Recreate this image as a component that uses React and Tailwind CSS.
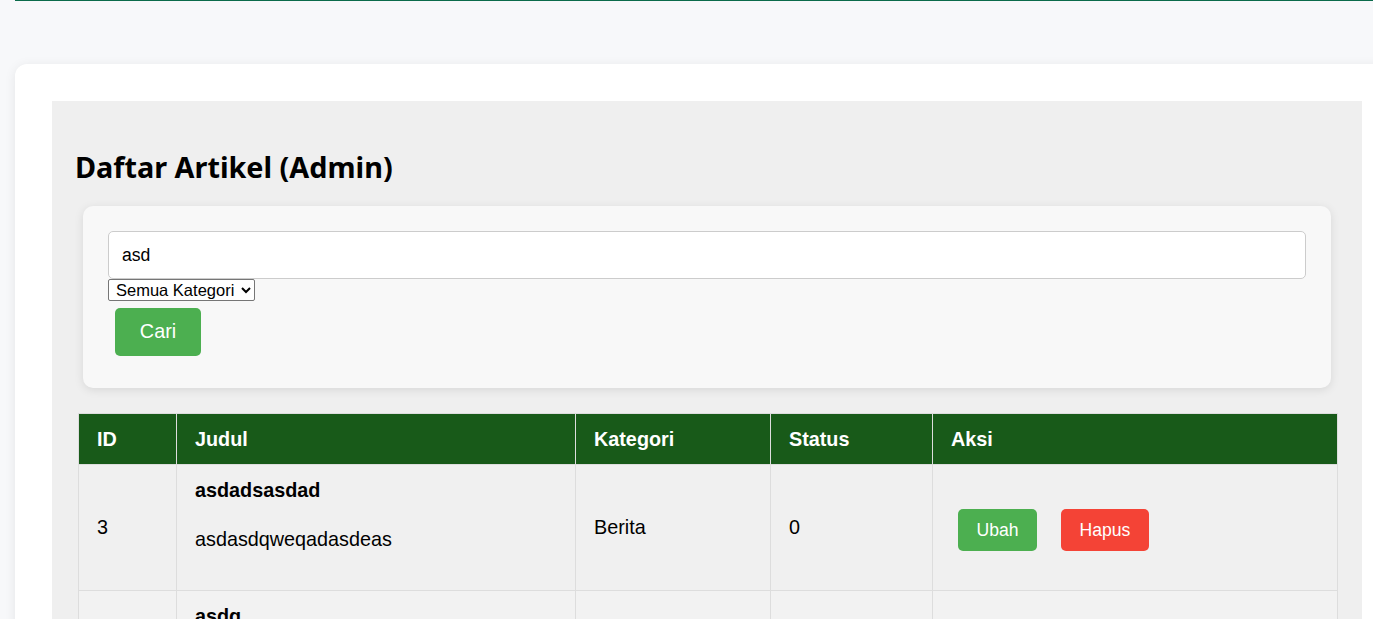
import { useState } from "react";

const rows = [
  { id: 3, title: "asdadsasdad", body: "asdasdqweqadasdeas", category: "Berita", status: 0 },
  { id: 4, title: "asdg", body: "asdgasdgasdg", category: "Berita", status: 0 },
];

function ArticleRow({ row, striped }) {
  return (
    <tr className={striped ? "bg-[#f2f2f2]" : "bg-[#f0f0f0]"}>
      <td className="border border-[#dddddd] px-[18px] align-middle">{row.id}</td>
      <td className="border border-[#dddddd] px-[18px] pt-[14px] pb-[40px] align-top">
        <div className="font-bold leading-[22px]">{row.title}</div>
        <p className="mt-[27px] leading-[22px]">{row.body}</p>
      </td>
      <td className="border border-[#dddddd] px-[18px] align-middle">{row.category}</td>
      <td className="border border-[#dddddd] px-[18px] align-middle">{row.status}</td>
      <td className="border border-[#dddddd] px-[18px] pt-[5px] align-middle">
        <div className="flex items-center gap-[24px] pl-[7px]">
          <button className="h-[42px] w-[79px] rounded-[5px] bg-[#4caf50] text-[17.6px] text-white">
            Ubah
          </button>
          <button className="h-[42px] w-[88px] rounded-[5px] bg-[#f44336] text-[17.6px] text-white">
            Hapus
          </button>
        </div>
      </td>
    </tr>
  );
}

export default function App() {
  const [search, setSearch] = useState("asd");
  const [category, setCategory] = useState("");

  return (
    <div className="min-h-screen overflow-hidden bg-[#f7f8fa] font-['Liberation_Sans',Arial,sans-serif] text-black">
      <div className="ml-[15px] h-px bg-[#0b6b4b]"></div>
      <div className="ml-[15px] mt-[63px] w-[1384px] rounded-t-[12px] bg-white p-[37px] shadow-[0_2px_12px_rgba(0,0,0,0.08)]">
        <div className="bg-[#efefef] pl-[26px] pr-[24px] pt-[48px] pb-10">
          <h2 className="-ml-[3px] font-['Noto_Sans',sans-serif] text-[28.8px] font-bold leading-[36px]">
            Daftar Artikel (Admin)
          </h2>

          <div className="ml-[5px] mr-[7px] mt-[21px] rounded-[10px] bg-[#f8f8f8] p-[25px] shadow-[0_2px_10px_rgba(0,0,0,0.1)]">
            <input
              type="text"
              value={search}
              onChange={(e) => setSearch(e.target.value)}
              className="block h-[48px] w-full rounded-[5px] border border-[#cccccc] bg-white px-[13px] text-[17.6px] focus:outline-none"
            />
            <select
              value={category}
              onChange={(e) => setCategory(e.target.value)}
              className="block h-[22px] w-[147px] rounded-[2px] border border-[#767676] bg-white pl-[3px] text-[16.5px] leading-[18px]"
            >
              <option value="">Semua Kategori</option>
              <option value="berita">Berita</option>
            </select>
            <button className="mt-[7px] ml-[7px] mb-[7px] h-[48px] w-[86px] rounded-[5px] bg-[#4caf50] text-[19.8px] text-white">
              Cari
            </button>
          </div>

          <table className="mt-[25px] w-full border-collapse text-left text-[19.8px]">
            <thead>
              <tr className="bg-[#185a19] text-white">
                <th className="w-[98px] border border-[#dddddd] px-[18px] py-[14px] leading-[22px]">ID</th>
                <th className="w-[399px] border border-[#dddddd] px-[18px] py-[14px] leading-[22px]">Judul</th>
                <th className="w-[195px] border border-[#dddddd] px-[18px] py-[14px] leading-[22px]">Kategori</th>
                <th className="w-[162px] border border-[#dddddd] px-[18px] py-[14px] leading-[22px]">Status</th>
                <th className="border border-[#dddddd] px-[18px] py-[14px] leading-[22px]">Aksi</th>
              </tr>
            </thead>
            <tbody>
              {rows.map((row, i) => (
                <ArticleRow key={row.id} row={row} striped={i % 2 === 1} />
              ))}
            </tbody>
          </table>
        </div>
      </div>
    </div>
  );
}
